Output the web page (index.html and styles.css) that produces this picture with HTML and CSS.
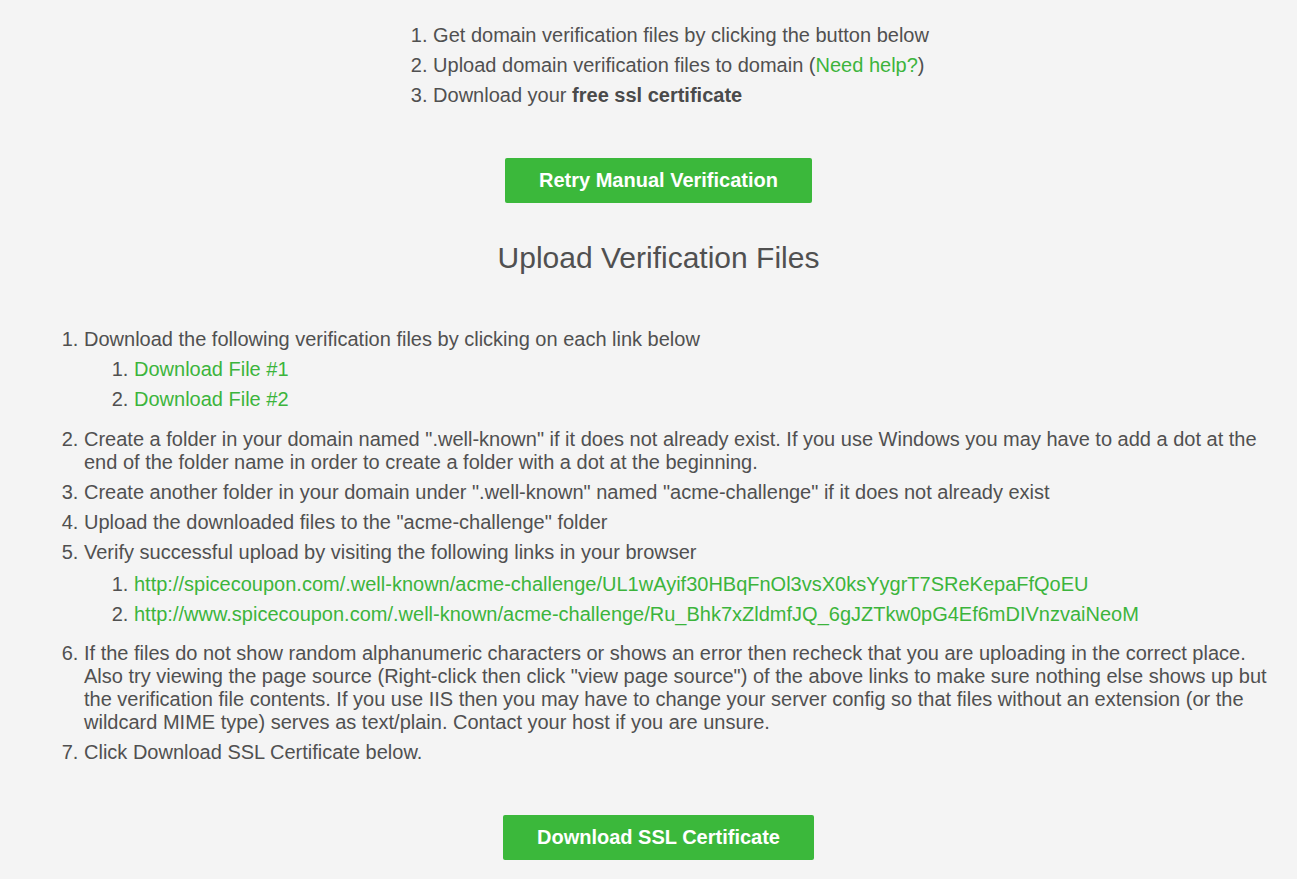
FILE: index.html
```html
<!DOCTYPE html>
<html lang="en">
<head>
<meta charset="utf-8">
<title>Manual Verification</title>
<link rel="stylesheet" href="styles.css">
</head>
<body>
<div class="page">
  <div class="summary">
    <ol class="summary-list">
      <li>Get domain verification files by clicking the button below</li>
      <li>Upload domain verification files to domain (<a href="#" class="link">Need help?</a>)</li>
      <li>Download your <strong>free ssl certificate</strong></li>
    </ol>
  </div>
  <div class="action">
    <a href="#" class="btn">Retry Manual Verification</a>
  </div>
  <h2 class="title">Upload Verification Files</h2>
  <ol class="steps">
    <li>Download the following verification files by clicking on each link below
      <ol class="sub">
        <li><a href="#" class="link">Download File #1</a></li>
        <li><a href="#" class="link">Download File #2</a></li>
      </ol>
    </li>
    <li>Create a folder in your domain named ".well-known" if it does not already exist. If you use Windows you may have to add a dot at the end of the folder name in order to create a folder with a dot at the beginning.</li>
    <li>Create another folder in your domain under ".well-known" named "acme-challenge" if it does not already exist</li>
    <li>Upload the downloaded files to the "acme-challenge" folder</li>
    <li>Verify successful upload by visiting the following links in your browser
      <ol class="sub sub-urls">
        <li><a href="#" class="link">http://spicecoupon.com/.well-known/acme-challenge/UL1wAyif30HBqFnOl3vsX0ksYygrT7SReKepaFfQoEU</a></li>
        <li><a href="#" class="link">http://www.spicecoupon.com/.well-known/acme-challenge/Ru_Bhk7xZldmfJQ_6gJZTkw0pG4Ef6mDIVnzvaiNeoM</a></li>
      </ol>
    </li>
    <li>If the files do not show random alphanumeric characters or shows an error then recheck that you are uploading in the correct place. Also try viewing the page source (Right-click then click "view page source") of the above links to make sure nothing else shows up but the verification file contents. If you use IIS then you may have to change your server config so that files without an extension (or the wildcard MIME type) serves as text/plain. Contact your host if you are unsure.</li>
    <li>Click Download SSL Certificate below.</li>
  </ol>
  <div class="action action-bottom">
    <a href="#" class="btn">Download SSL Certificate</a>
  </div>
</div>
</body>
</html>
```

FILE: styles.css
```css
html, body {
  margin: 0;
  padding: 0;
  background: #f4f4f4;
}
body {
  font-family: "Liberation Sans", Arial, sans-serif;
  font-size: 20px;
  line-height: 23px;
  color: #505050;
}
.page {
  padding: 24px 0 0 0;
}
.summary {
  display: flex;
  justify-content: center;
}
.summary-list {
  margin: 0 0 0 45px;
  padding: 0 0 0 20px;
}
ol li {
  margin-bottom: 7px;
}
.link {
  color: #3cb43c;
  text-decoration: none;
}
strong {
  font-weight: bold;
  color: #4a4a4a;
}
.action {
  display: flex;
  justify-content: center;
  margin-top: 44px;
  padding-left: 20px;
}
.btn {
  display: block;
  background: #3bb83b;
  color: #ffffff;
  font-weight: bold;
  text-decoration: none;
  padding: 11px 34px;
  line-height: 23px;
  border-radius: 2px;
}
.title {
  margin: 37px 0 0 0;
  padding-left: 20px;
  text-align: center;
  font-size: 30px;
  font-weight: normal;
  line-height: 36px;
  color: #505050;
}
.steps {
  margin: 52px 12px 0 62px;
  padding: 0 0 0 22px;
}
.sub {
  margin: 7px 0 17px 0;
  padding: 0 0 0 50px;
}
.sub-urls {
  margin: 9px 0 16px 0;
}
.action-bottom {
  margin-top: 51px;
  padding-bottom: 30px;
}
```
